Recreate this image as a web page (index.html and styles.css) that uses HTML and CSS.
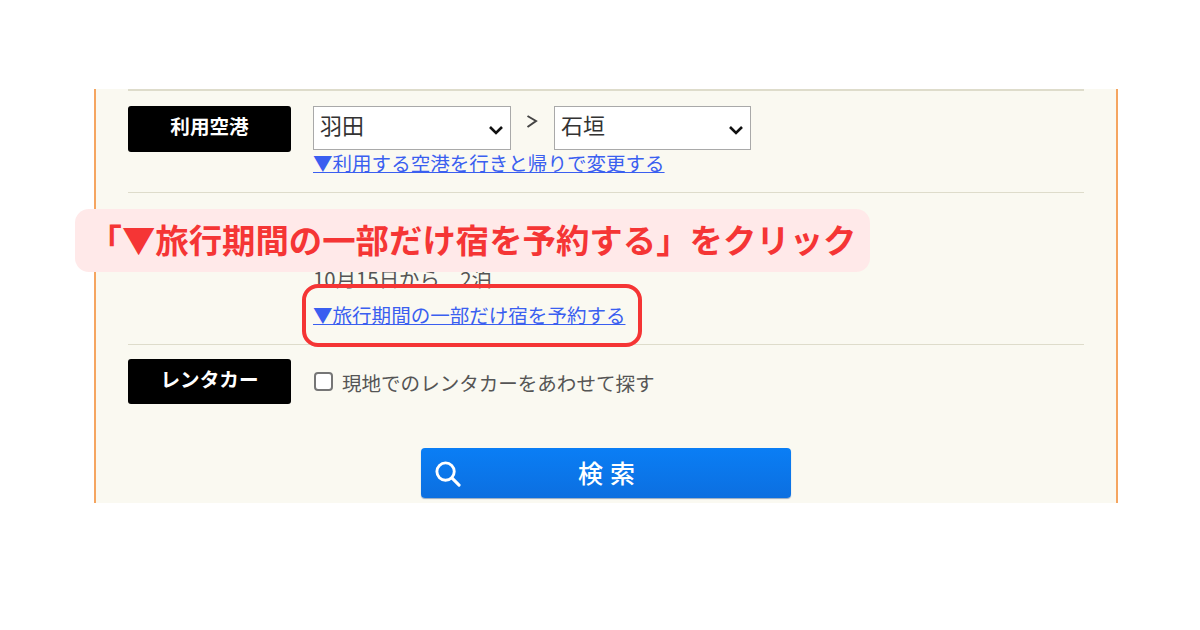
FILE: index.html
```html
<!DOCTYPE html>
<html lang="ja">
<head>
<meta charset="utf-8">
<title>検索</title>
<link rel="stylesheet" href="styles.css">
</head>
<body>
<main class="panel">
  <section class="row row-airport">
    <div class="label">利用空港</div>
    <div class="content">
      <div class="airports">
        <select class="select"><option>羽田</option></select>
        <svg class="sep" viewBox="0 0 12 14" width="12" height="14" aria-hidden="true"><path d="M1.5 1 10 6 1.5 12" fill="none" stroke="#444" stroke-width="2"/></svg>
        <select class="select select-to"><option>石垣</option></select>
      </div>
      <a class="link" href="#">▼利用する空港を行きと帰りで変更する</a>
    </div>
  </section>
  <section class="row row-hotel">
    <div class="label">宿泊</div>
    <div class="content content-hotel">
      <p class="stay">10月15日から　2泊</p>
      <a class="link" href="#">▼旅行期間の一部だけ宿を予約する</a>
    </div>
  </section>
  <section class="row row-car">
    <div class="label label-car">レンタカー</div>
    <label class="check"><input class="box" type="checkbox"><span>現地でのレンタカーをあわせて探す</span></label>
  </section>
  <div class="actions">
    <button class="search" type="button">
      <svg class="search-icon" viewBox="0 0 28 28" width="28" height="28" aria-hidden="true"><circle cx="12" cy="12" r="9" fill="none" stroke="#fff" stroke-width="3"/><path d="M18.5 18.5 26 26" fill="none" stroke="#fff" stroke-width="3.2" stroke-linecap="round"/></svg>
      <span class="search-text">検索</span>
    </button>
  </div>
</main>
<div class="callout">「▼旅行期間の一部だけ宿を予約する」をクリック</div>
<div class="highlight"></div>
</body>
</html>
```
FILE: styles.css
```css
* { box-sizing: border-box; }
html, body { margin: 0; background: #fff; }
body {
  width: 1200px;
  height: 630px;
  overflow: hidden;
  position: relative;
  padding-top: 88px;
  font-family: "Noto Sans CJK JP", "Noto Sans", sans-serif;
  color: #555;
}
.panel {
  width: 1024px;
  height: 414px;
  margin-left: 94px;
  padding: 0 32px;
  background: #faf9f1;
  border-left: 2px solid #f5a560;
  border-right: 2px solid #f5a560;
}
.row {
  display: flex;
  gap: 22px;
  align-items: flex-start;
  border-top: 1px solid #dedccb;
  padding-top: 16px;
}
.row-airport { height: 103px; margin-top: 1px; border-top-width: 2px; padding-top: 15px; }
.row-hotel { height: 152px; }
.row-car { height: 104px; padding-top: 14px; }
.label {
  flex: 0 0 163px;
  height: 46px;
  background: #000;
  border-radius: 3px;
  color: #fff;
  font-size: 19.6px;
  font-weight: 700;
  line-height: 40px;
  text-align: center;
}
.label-car { height: 45px; line-height: 39px; }
.content { display: flex; flex-direction: column; align-items: flex-start; }
.airports { display: flex; align-items: flex-start; height: 44px; }
.select {
  width: 198px;
  height: 44px;
  padding: 0 30px 9px 6px;
  font: 22px "Noto Sans CJK JP", sans-serif;
  color: #333;
  appearance: none;
  background: #fff url("data:image/svg+xml,%3Csvg xmlns='http://www.w3.org/2000/svg' width='16' height='10'%3E%3Cpath d='M2 2l6 6 6-6' fill='none' stroke='%23111' stroke-width='2.6'/%3E%3C/svg%3E") no-repeat right 6px top 18px;
  border: 1px solid #a9a9a9;
  border-radius: 0;
}
.select-to { width: 197px; }
.sep { margin: 9px 16px 0 15px; flex: none; }
.link {
  font-size: 19.55px;
  line-height: 26px;
  color: #3a5ff0;
  white-space: nowrap;
}
.content-hotel { padding-top: 56px; }
.stay {
  margin: 0 0 11px;
  font-size: 20.4px;
  line-height: 26px;
  color: #555;
}
.check { display: flex; align-items: center; gap: 9px; margin-top: 11px; font-size: 19.55px; line-height: 26px; }
.box {
  width: 19px;
  height: 19px;
  margin: 0 0 4px 1px;
  appearance: none;
  background: #fff;
  border: 2px solid #767676;
  border-radius: 4px;
}
.actions { display: flex; justify-content: center; }
.search {
  position: relative;
  width: 370px;
  height: 50px;
  border: 0;
  border-radius: 4px;
  background: linear-gradient(#0a7ef5, #0c6fe0);
  box-shadow: 0 1px 1px rgba(0, 50, 120, .4);
  color: #fff;
  font: 500 25px "Noto Sans CJK JP", sans-serif;
  letter-spacing: 7px;
  padding: 0 0 2px;
}
.search-icon { position: absolute; left: 13px; top: 12px; width: 27px; height: 27px; }
.search-text { display: inline-block; margin-left: 8px; }
.callout {
  position: absolute;
  left: 75px;
  top: 209px;
  width: 795px;
  height: 63px;
  border-radius: 14px;
  background: #ffe9e9;
  color: #f53535;
  font-size: 33.4px;
  font-weight: 700;
  line-height: 60px;
  text-align: center;
  white-space: nowrap;
}
.highlight {
  position: absolute;
  left: 302px;
  top: 284px;
  width: 340px;
  height: 63px;
  border: 4px solid #f53535;
  border-radius: 16px;
}
```
